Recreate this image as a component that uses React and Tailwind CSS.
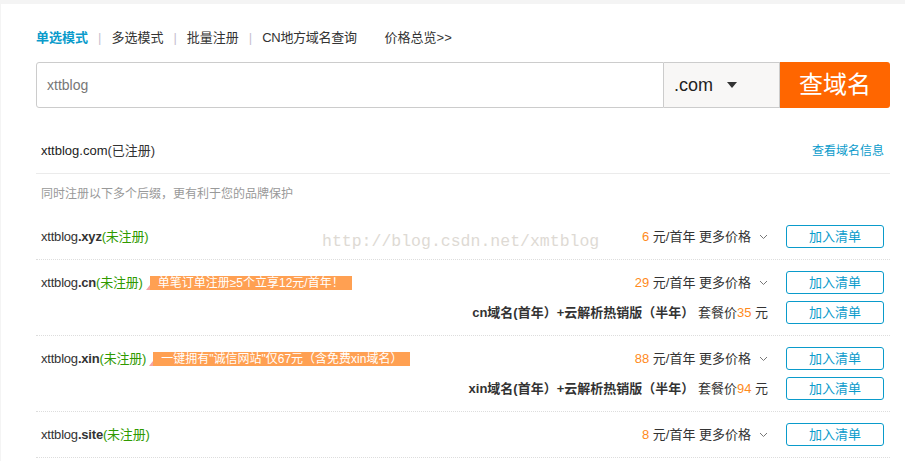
import React from 'react';

const BLUE = 'text-[#0a9bcb]';

function Chevron() {
  return (
    <svg className="ml-[8px] inline-block" width="9" height="6" viewBox="0 0 9 6" fill="none">
      <path d="M1 1l3.5 3.5L8 1" stroke="#777" strokeWidth="1" />
    </svg>
  );
}

function AddButton() {
  return (
    <button className="ml-[18px] h-[23px] w-[98px] shrink-0 rounded-[3px] border border-[#0a9bcb] bg-white text-[13px] leading-none text-[#0a9bcb]">
      加入清单
    </button>
  );
}

function Tag({ children }) {
  return (
    <span className="ml-[3px] inline-flex items-end">
      <span className="h-0 w-0 border-b-[5px] border-l-[4px] border-b-[#f7a3a3] border-l-transparent"></span>
      <span className="flex h-[14px] items-center bg-[#ffa052] px-[8px] text-[12px] leading-none text-white">{children}</span>
    </span>
  );
}

function Price({ value }) {
  return (
    <span className="flex items-center text-[13px] text-[#333]">
      <span className="text-[#ff8a1c]">{value}</span>
      <span>&nbsp;元/首年 更多价格</span>
      <Chevron />
    </span>
  );
}

function Line({ left, right }) {
  return (
    <div className="flex h-[23px] items-center">
      <div className="flex items-center text-[13px] text-[#333]">{left}</div>
      <div className="ml-auto flex items-center">{right}</div>
      <AddButton />
    </div>
  );
}

function Domain({ name, ext }) {
  return (
    <span className="tracking-[-0.2px]">
      {name}
      <b className="font-semibold">{ext}</b>
      <span className="text-[#2f9a00]">(未注册)</span>
    </span>
  );
}

function Package({ ext, price }) {
  return (
    <span className="text-[13px] text-[#333]">
      <b className="font-semibold">{ext}域名(首年）+云解析热销版（半年）</b>
      <span> 套餐价</span>
      <span className="text-[#ff8a1c]">{price}</span>
      <span> 元</span>
    </span>
  );
}

export default function App() {
  return (
    <div
      className="min-h-[461px] bg-[#f4f4f4] pl-[1px] pt-[4px]"
      style={{ fontFamily: '"Liberation Sans", "Noto Sans CJK SC", sans-serif' }}
    >
      <div className="relative min-h-[457px] bg-white pl-[35px] pr-[15px] pt-[24px]">
        {/* tabs */}
        <div className="flex h-[20px] items-center text-[13px] text-[#333]">
          <span className={`font-bold ${BLUE}`}>单选模式</span>
          <span className="mx-[10px] text-[#c8c0d0]">|</span>
          <span>多选模式</span>
          <span className="mx-[10px] text-[#c8c0d0]">|</span>
          <span>批量注册</span>
          <span className="mx-[10px] text-[#c8c0d0]">|</span>
          <span className="tracking-[-0.3px]">CN地方域名查询</span>
          <span className="ml-[28px]">价格总览&gt;&gt;</span>
        </div>

        {/* search */}
        <div className="mt-[14px] flex h-[46px]">
          <div className="flex flex-1 items-center rounded-l-[3px] border border-[#cccccc] px-[10px] text-[14px] text-[#777]">
            xttblog
          </div>
          <div className="flex w-[116px] items-center border-y border-r border-[#cccccc] bg-[#f8f7f6] pl-[10px] text-[18px] font-medium text-[#222]">
            .com
            <svg className="ml-[14px]" width="10" height="6" viewBox="0 0 10 6">
              <path d="M0 0h10L5 6z" fill="#333" />
            </svg>
          </div>
          <button className="flex w-[110px] items-center justify-center rounded-r-[3px] bg-[#ff6600] text-[24px] text-white">
            查域名
          </button>
        </div>

        {/* result header */}
        <div className="mt-[33px] flex h-[20px] items-center px-[5px] pr-[6px]">
          <span className="text-[13px] font-medium text-[#222]">
            xttblog.com<span className="font-normal text-[#333]">(已注册)</span>
          </span>
          <span className={`ml-auto text-[12px] ${BLUE}`}>查看域名信息</span>
        </div>
        <div className="mt-[12px] border-b border-[#ebebeb]"></div>

        <div className="mt-[10px] flex h-[20px] items-center px-[5px] text-[12px] text-[#999]">
          同时注册以下多个后缀，更有利于您的品牌保护
        </div>

        {/* rows */}
        <div className="mt-[10px]">
          <div className="border-b border-dotted border-[#dddddd] pb-[11px] pl-[5px] pr-[6px] pt-[11px]">
            <Line left={<Domain name="xttblog" ext=".xyz" />} right={<Price value="6" />} />
          </div>
          <div className="flex flex-col gap-[7px] border-b border-dotted border-[#dddddd] pb-[11px] pl-[5px] pr-[6px] pt-[11px]">
            <Line
              left={
                <>
                  <Domain name="xttblog" ext=".cn" />
                  <Tag>单笔订单注册≥5个立享12元/首年！</Tag>
                </>
              }
              right={<Price value="29" />}
            />
            <Line left={null} right={<Package ext="cn" price="35" />} />
          </div>
          <div className="flex flex-col gap-[7px] border-b border-dotted border-[#dddddd] pb-[11px] pl-[5px] pr-[6px] pt-[11px]">
            <Line
              left={
                <>
                  <Domain name="xttblog" ext=".xin" />
                  <Tag>一键拥有"诚信网站"仅67元（含免费xin域名）</Tag>
                </>
              }
              right={<Price value="88" />}
            />
            <Line left={null} right={<Package ext="xin" price="94" />} />
          </div>
          <div className="border-b border-dotted border-[#dddddd] pb-[11px] pl-[5px] pr-[6px] pt-[11px]">
            <Line left={<Domain name="xttblog" ext=".site" />} right={<Price value="8" />} />
          </div>
        </div>

        {/* watermark */}
        <div className="pointer-events-none absolute left-[321px] top-[226px] text-[16.5px] text-[#dedad4]" style={{ fontFamily: '"Liberation Mono", monospace' }}>
          http://blog.csdn.net/xmtblog
        </div>
      </div>
    </div>
  );
}
